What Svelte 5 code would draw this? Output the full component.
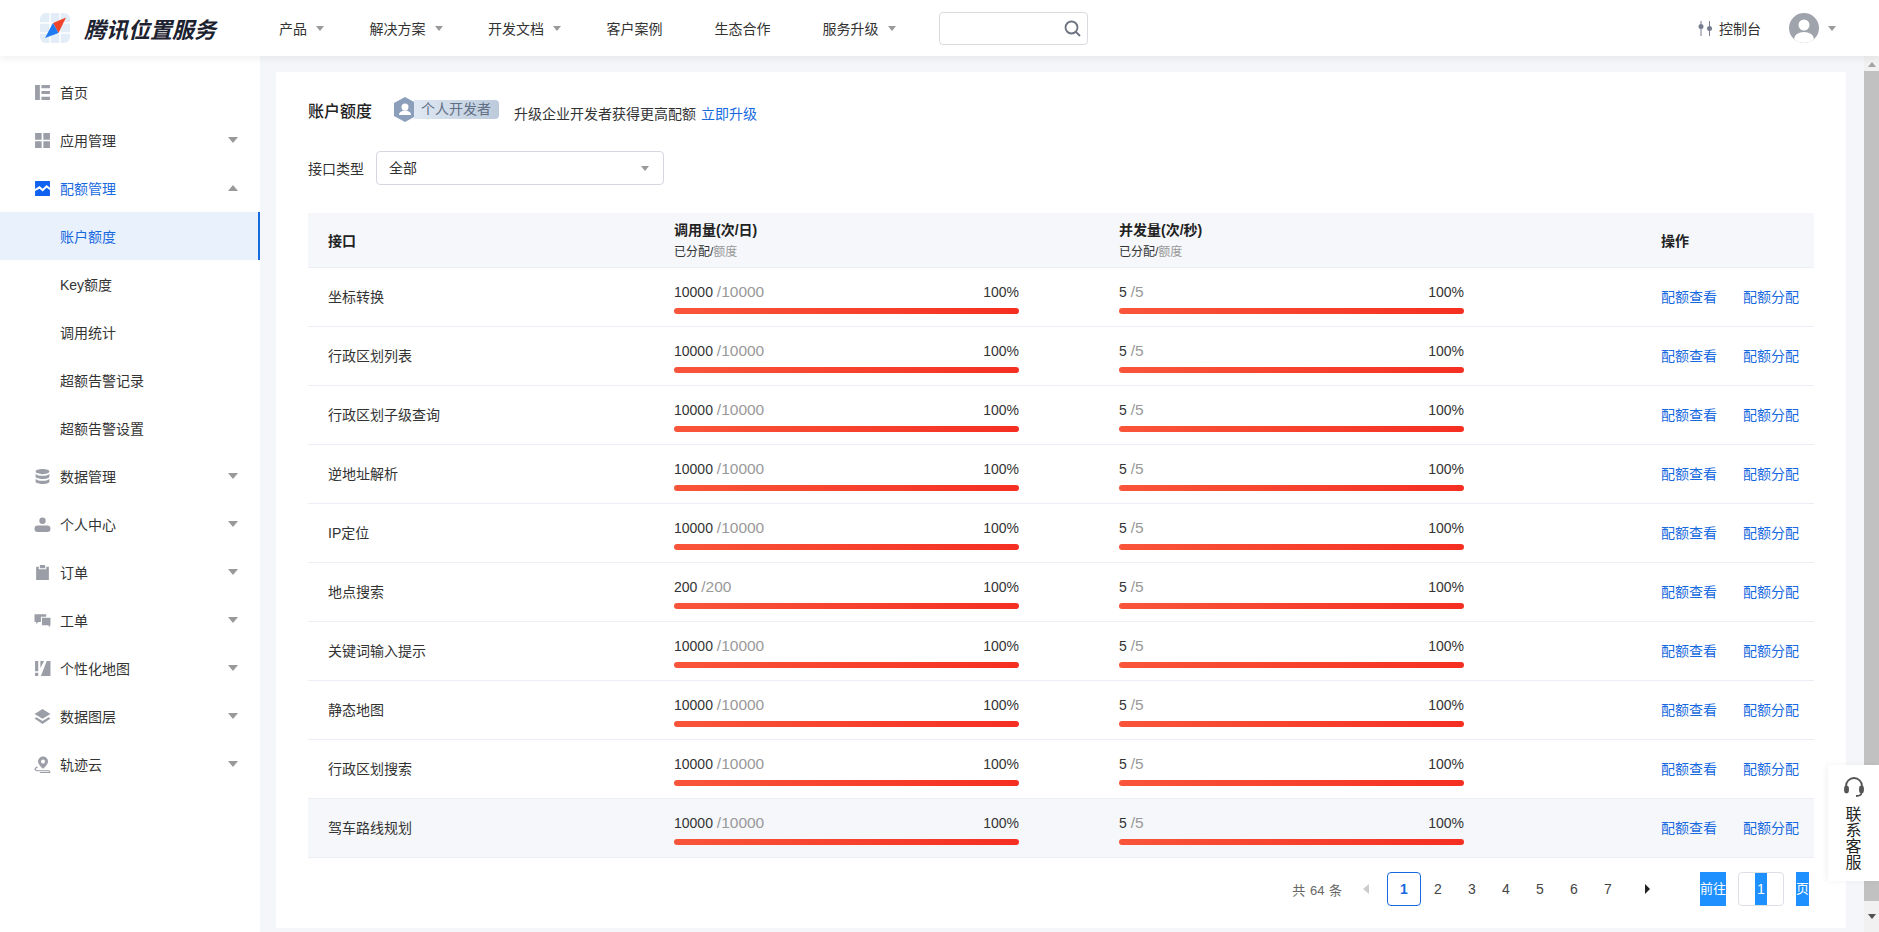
<script>
  const navItems = [
    { label: "产品", caret: true },
    { label: "解决方案", caret: true },
    { label: "开发文档", caret: true },
    { label: "客户案例" },
    { label: "生态合作" },
    { label: "服务升级", caret: true },
  ];

  const icons = {
    home: "M1 1h4.500v14H1zM7 1h8v3H7zM7 6.500h8v3H7zM7 12h8v3H7z",
    apps: "M1 1h6.200v6.200H1zM8.800 1H15v6.200H8.800zM1 8.800h6.200V15H1zM8.800 8.800H15V15H8.800z",
    quota: "M1 1h14v6.200l-3.200-2.400-3.600 3.400-3-2.600L1 8.400zM1 10.400l4.200-2.200 3 2.700 3.600-3.500L15 9.400V15H1z",
    data: "M8 1c3.600 0 6.500 1 6.500 2.400S11.600 5.800 8 5.800 1.500 4.800 1.500 3.400 4.400 1 8 1zM1.500 5.600C2.800 6.800 5.200 7.300 8 7.300s5.200-.5 6.500-1.700V8c0 1.400-2.900 2.400-6.500 2.400S1.500 9.400 1.500 8zM1.500 10.300c1.300 1.200 3.700 1.700 6.500 1.700s5.200-.5 6.500-1.700v2.300c0 1.400-2.900 2.400-6.500 2.400s-6.500-1-6.500-2.400z",
    user: "M8 1.500a3 3 0 1 1 0 6 3 3 0 0 1 0-6zM3.500 9h9a3 3 0 0 1 0 6h-9a3 3 0 0 1 0-6z",
    order: "M2 2.500h2.500V5h7V2.500H14V15H2zM5.500 1h5v3h-5z",
    ticket: "M0.500 2h11v2.500H6.500v5H4L2.200 11.500V9.500H.500zM7.500 5.500h8v7H15v1.500l-1.800-1.500H7.500z",
    map: "M1 1h3v9.500H1zM1 12h3v3H1zM6 1h3.500L6 7.500zM12 1h3.500v14H6.500z",
    layers: "M8 1l7.500 4.600L8 10.200.500 5.600zM2.300 8.700L8 12.200l5.700-3.500 1.800 1.100L8 15 .500 9.800z",
    track: "M8.500 .5a4.700 4.700 0 0 1 4.700 4.700c0 3-4.700 6.800-4.700 6.800S3.800 8.200 3.800 5.200A4.700 4.700 0 0 1 8.500 .5zm0 2.800a1.900 1.900 0 1 0 0 3.800 1.900 1.900 0 0 0 0-3.800zM2.800 9.800l1 1C2.600 11.200 1.800 11.800 1.800 12.400c0 .6.900 1 2.200 1h8.500c1.800 0 3 .6 3 1.600 0 .6-.5 1-1.200 1H5.500v-1h8.600c.2 0 .4-.1.400-.2 0-.2-.8-.4-2-.4H4c-2 0-3.500-.8-3.500-2 0-1 .9-2 2.300-2.600z",
  };

  const menu = [
    { label: "首页", icon: "home" },
    { label: "应用管理", icon: "apps", caret: "down" },
    { label: "配额管理", icon: "quota", caret: "up", open: true },
    { label: "账户额度", sub: true, active: true },
    { label: "Key额度", sub: true },
    { label: "调用统计", sub: true },
    { label: "超额告警记录", sub: true },
    { label: "超额告警设置", sub: true },
    { label: "数据管理", icon: "data", caret: "down" },
    { label: "个人中心", icon: "user", caret: "down" },
    { label: "订单", icon: "order", caret: "down" },
    { label: "工单", icon: "ticket", caret: "down" },
    { label: "个性化地图", icon: "map", caret: "down" },
    { label: "数据图层", icon: "layers", caret: "down" },
    { label: "轨迹云", icon: "track", caret: "down" },
  ];

  const rows = [
    { name: "坐标转换", calls: 10000 },
    { name: "行政区划列表", calls: 10000 },
    { name: "行政区划子级查询", calls: 10000 },
    { name: "逆地址解析", calls: 10000 },
    { name: "IP定位", calls: 10000 },
    { name: "地点搜索", calls: 200 },
    { name: "关键词输入提示", calls: 10000 },
    { name: "静态地图", calls: 10000 },
    { name: "行政区划搜索", calls: 10000 },
    { name: "驾车路线规划", calls: 10000, hover: true },
  ];

  const pages = [1, 2, 3, 4, 5, 6, 7];
</script>

<div class="app">
  <header class="topbar">
    <div class="logo">
      <svg width="30" height="30" viewBox="0 0 30 30">
        <rect width="30" height="30" rx="6" fill="#e3edf8" />
        <path d="M10 0v30M20 0v30M0 10h30M0 20h30" stroke="#fff" stroke-width="1.500" />
        <path d="M26 4.500L18.500 20 13 10z" fill="#f0452b" />
        <path d="M5 25L13 10l5.500 10z" fill="#1f7bf2" />
      </svg>
      <span class="brand">腾讯位置服务</span>
    </div>
    <nav class="nav">
      {#each navItems as item}
        <span class="nav-item" class:has-caret={item.caret}>
          {item.label}
          {#if item.caret}<i class="caret"></i>{/if}
        </span>
      {/each}
    </nav>
    <div class="search">
      <svg width="17" height="17" viewBox="0 0 17 17" fill="none" stroke="#6b7280" stroke-width="1.800">
        <circle cx="7.500" cy="7.500" r="6" />
        <path d="M12 12l4 4" />
      </svg>
    </div>
    <div class="top-right">
      <svg width="15" height="15" viewBox="0 0 15 15" fill="#767d8c">
        <path d="M2.500 0h1v3h-1zM2.500 8h1v7h-1zM11 0h1v5h-1zM11 10h1v5h-1z" />
        <circle cx="3" cy="5.500" r="2.500" />
        <circle cx="11.500" cy="7.500" r="2.500" />
      </svg>
      <span class="console">控制台</span>
      <svg class="avatar" width="30" height="30" viewBox="0 0 30 30">
        <defs>
          <clipPath id="avatar-clip"><circle cx="15" cy="15" r="15" /></clipPath>
        </defs>
        <circle cx="15" cy="15" r="15" fill="#9fa3ab" />
        <g clip-path="url(#avatar-clip)" fill="#fff">
          <circle cx="15" cy="12" r="5.500" />
          <ellipse cx="15" cy="26" rx="10" ry="7" />
        </g>
      </svg>
      <i class="caret"></i>
    </div>
  </header>

  <div class="body">
    <aside class="sidebar">
      {#each menu as item}
        <div class="menu-item" class:sub={item.sub} class:open={item.open} class:active={item.active}>
          {#if item.icon}
            <svg class="menu-icon" width="17" height="17" viewBox="0 0 16 16" fill="currentColor" fill-rule="evenodd">
              <path d={icons[item.icon]} />
            </svg>
          {/if}
          <span>{item.label}</span>
          {#if item.caret}
            <i class="menu-caret" class:up={item.caret === "up"}></i>
          {/if}
        </div>
      {/each}
    </aside>

    <main class="main">
      <section class="card">
        <div class="title-row">
          <h1>账户额度</h1>
          <div class="badge">
            <svg width="22" height="25" viewBox="0 0 22 25">
              <path d="M11 0l11 6v13l-11 6L0 19V6z" fill="#8c9fba" />
              <circle cx="11" cy="10" r="3.500" fill="#fff" />
              <path d="M5 18c0-3 3-4.500 6-4.500s6 1.500 6 4.500z" fill="#fff" />
            </svg>
            <span class="badge-label">个人开发者</span>
          </div>
          <p class="upgrade">升级企业开发者获得更高配额 <span class="link">立即升级</span></p>
        </div>

        <div class="filter">
          <span>接口类型</span>
          <div class="select"><span>全部</span><i class="caret"></i></div>
        </div>

        <div class="table">
          <div class="row head">
            <div class="name-cell"><strong>接口</strong></div>
            <div class="head-cell">
              <strong>调用量(次/日)</strong>
              <small>已分配/<em>额度</em></small>
            </div>
            <div class="head-cell">
              <strong>并发量(次/秒)</strong>
              <small>已分配/<em>额度</em></small>
            </div>
            <div class="action-cell"><strong>操作</strong></div>
          </div>
          {#each rows as row}
            <div class="row" class:hover={row.hover}>
              <div class="name-cell body-cell">{row.name}</div>
              <div class="usage">
                <div class="usage-text">
                  <span>{row.calls} <em>/{row.calls}</em></span>
                  <span>100%</span>
                </div>
                <div class="bar"></div>
              </div>
              <div class="usage">
                <div class="usage-text">
                  <span>5 <em>/5</em></span>
                  <span>100%</span>
                </div>
                <div class="bar"></div>
              </div>
              <div class="action-cell body-cell actions">
                <span class="link">配额查看</span>
                <span class="link">配额分配</span>
              </div>
            </div>
          {/each}
        </div>

        <div class="pager">
          <span class="total">共 64 条</span>
          <span class="page-arrow prev"></span>
          {#each pages as page}
            <span class="page" class:current={page === 1}>{page}</span>
          {/each}
          <span class="page-arrow next"></span>
          <span class="jump">前往</span>
          <span class="jump-input"><span>1</span></span>
          <span class="jump unit">页</span>
        </div>
      </section>
    </main>

    <div class="scrollbar">
      <i class="arrow-up"></i>
      <div class="thumb"></div>
      <i class="arrow-down"></i>
    </div>
  </div>

  <div class="contact">
    <svg width="22" height="21" viewBox="0 0 22 21" fill="none" stroke="#555" stroke-width="1.800">
      <path d="M3 11V9a8 8 0 0 1 16 0v2" />
      <rect x="2" y="9.500" width="3" height="6" rx="1.500" fill="#555" />
      <rect x="17" y="9.500" width="3" height="6" rx="1.500" fill="#555" />
      <path d="M18.500 15.500c0 2.500-2 3.500-5.500 3.500" />
    </svg>
    <span>联系客服</span>
  </div>
</div>

<style>
  :global(body) {
    margin: 0;
    font-family: "Liberation Sans", "Noto Sans CJK SC", sans-serif;
    font-size: 14px;
    color: #333;
    background: #f4f6f9;
  }

  .app {
    position: relative;
    display: flex;
    flex-direction: column;
    height: 932px;
    overflow: hidden;
  }

  .topbar {
    position: relative;
    z-index: 2;
    display: flex;
    align-items: center;
    flex: none;
    height: 56px;
    padding: 0 43px 0 40px;
    background: #fff;
    box-shadow: 0 2px 8px rgba(0, 0, 0, 0.07);
  }

  .logo {
    display: flex;
    align-items: center;
    gap: 14px;
  }

  .brand {
    font-size: 22px;
    font-weight: 700;
    font-style: italic;
    color: #1c2230;
    white-space: nowrap;
  }

  .nav {
    display: flex;
    gap: 52px;
    margin-left: 63px;
  }

  .nav-item {
    display: flex;
    align-items: center;
    gap: 9px;
    white-space: nowrap;
  }

  .nav-item.has-caret {
    margin-right: -6.500px;
  }

  .caret {
    display: block;
    width: 0;
    height: 0;
    border-style: solid;
    border-width: 5px 4px 0;
    border-color: #999 transparent transparent;
  }

  .search {
    display: flex;
    align-items: center;
    justify-content: flex-end;
    box-sizing: border-box;
    width: 149px;
    height: 33px;
    margin-left: 50px;
    padding-right: 6px;
    border: 1px solid #d8dbe0;
    border-radius: 4px;
  }

  .top-right {
    display: flex;
    align-items: center;
    margin-left: auto;
  }

  .console {
    margin: 0 28px 0 6px;
  }

  .avatar {
    margin-right: 9px;
  }

  .body {
    display: flex;
    flex: 1;
    min-height: 0;
  }

  .sidebar {
    flex: none;
    box-sizing: border-box;
    width: 260px;
    padding-top: 12px;
    background: #fff;
  }

  .menu-item {
    position: relative;
    display: flex;
    align-items: center;
    height: 48px;
    padding: 0 22px 0 34px;
    color: #333;
  }

  .menu-item.sub {
    padding-left: 60px;
  }

  .menu-item.open {
    color: #1769e0;
  }

  .menu-item.active {
    color: #1769e0;
    background: #e9f1fc;
    box-shadow: inset -2px 0 0 #1769e0;
  }

  .menu-icon {
    flex: none;
    margin-right: 9px;
    color: #9b9ea6;
  }

  .open .menu-icon {
    color: #0f62f0;
  }

  .menu-caret {
    width: 0;
    height: 0;
    margin-left: auto;
    border-style: solid;
    border-width: 6px 5px 0;
    border-color: #999 transparent transparent;
  }

  .menu-caret.up {
    border-width: 0 5px 6px;
    border-color: transparent transparent #999;
  }

  .main {
    flex: 1;
    min-width: 0;
    padding: 16px 18px 4px 16px;
  }

  .card {
    box-sizing: border-box;
    height: 856px;
    padding: 25px 32px 0;
    background: #fff;
  }

  .title-row {
    display: flex;
    align-items: center;
    height: 25px;
  }

  h1 {
    margin: 0 22px 0 0;
    font-size: 16px;
    font-weight: 500;
    color: #222;
  }

  .badge {
    display: flex;
    align-items: center;
  }

  .badge-label {
    margin-left: -2px;
    padding: 0 8px 0 7px;
    height: 19px;
    line-height: 19px;
    font-size: 14px;
    color: #5f6f85;
    border-radius: 0 4px 4px 0;
    background: linear-gradient(90deg, #dfe8f3, #bccadb);
  }

  .upgrade {
    margin: 6px 0 0 15px;
    white-space: nowrap;
  }

  .upgrade .link {
    margin-left: 1px;
  }

  .link {
    color: #1769e0;
  }

  .filter {
    display: flex;
    align-items: center;
    gap: 12px;
    margin-top: 29px;
  }

  .select {
    display: flex;
    align-items: center;
    justify-content: space-between;
    box-sizing: border-box;
    width: 288px;
    height: 34px;
    padding: 0 14px 0 12px;
    border: 1px solid #d5d8de;
    border-radius: 4px;
  }

  .select span {
    padding-bottom: 2px;
  }

  .table {
    margin-top: 28px;
  }

  .row {
    display: grid;
    grid-template-columns: 366px 445px 542px 1fr;
    box-sizing: border-box;
    height: 59px;
    border-bottom: 1px solid #ebeef5;
  }

  .row.head {
    height: 55px;
    background: #f5f7fa;
  }

  .row.hover {
    background: #f5f7fa;
  }

  .name-cell {
    display: flex;
    align-items: center;
    padding-left: 20px;
  }

  .body-cell {
    padding-bottom: 2px;
  }

  .head-cell {
    display: flex;
    flex-direction: column;
    gap: 3px;
    padding-top: 6px;
  }

  strong {
    font-weight: 700;
    color: #222;
  }

  small {
    font-size: 12px;
  }

  em {
    font-style: normal;
    color: #999;
  }

  .usage-text em {
    font-size: 15.500px;
  }

  .action-cell {
    display: flex;
    align-items: center;
  }

  .actions {
    gap: 26px;
  }

  .usage {
    width: 345px;
    padding-top: 14px;
  }

  .usage-text {
    display: flex;
    justify-content: space-between;
    height: 20px;
    line-height: 20px;
  }

  .bar {
    height: 6px;
    margin-top: 6px;
    border-radius: 3px;
    background: linear-gradient(90deg, #f9553a, #f52f22);
  }

  .pager {
    display: flex;
    align-items: center;
    justify-content: flex-end;
    height: 34px;
    margin-top: 14px;
    padding-right: 5px;
  }

  .total {
    margin-right: 11px;
    font-size: 13px;
    color: #666;
    word-spacing: 1px;
  }

  .page-arrow {
    display: flex;
    align-items: center;
    justify-content: center;
    width: 34px;
    height: 34px;
  }

  .page-arrow::before {
    content: "";
    border-style: solid;
  }

  .prev::before {
    margin-right: 9px;
    border-width: 5px 6px 5px 0;
    border-color: transparent #ccc transparent transparent;
  }

  .next {
    margin: 0 36px 0 5px;
  }

  .next::before {
    border-width: 5px 0 5px 5px;
    border-color: transparent transparent transparent #222;
  }

  .page {
    box-sizing: border-box;
    width: 34px;
    height: 34px;
    line-height: 34px;
    text-align: center;
    color: #444;
  }

  .page.current {
    line-height: 32px;
    font-weight: 700;
    color: #1769e0;
    border: 1px solid #1769e0;
    border-radius: 4px;
  }

  .jump {
    width: 26px;
    height: 34px;
    line-height: 34px;
    font-size: 13px;
    white-space: nowrap;
    color: #fff;
    background: #1e90ff;
  }

  .jump.unit {
    width: 13px;
  }

  .jump-input {
    display: flex;
    justify-content: center;
    box-sizing: border-box;
    width: 46px;
    height: 34px;
    margin: 0 12px;
    border: 1px solid #dcdfe6;
    border-radius: 4px;
  }

  .jump-input span {
    width: 12px;
    line-height: 32px;
    text-align: center;
    color: #fff;
    background: #1e90ff;
  }

  .scrollbar {
    display: flex;
    flex-direction: column;
    align-items: center;
    flex: none;
    width: 15px;
    background: #f1f1f1;
  }

  .thumb {
    width: 100%;
    height: 830px;
    margin-top: 4px;
    background: #c1c1c1;
  }

  .arrow-up,
  .arrow-down {
    width: 0;
    height: 0;
    border-style: solid;
  }

  .arrow-up {
    margin-top: 6px;
    border-width: 0 4px 5px;
    border-color: transparent transparent #a3a3a3;
  }

  .arrow-down {
    margin-top: 13px;
    border-width: 5px 4px 0;
    border-color: #505050 transparent transparent;
  }

  /* floating help widget over the scrollbar */
  .contact {
    position: absolute;
    top: 765px;
    right: 0;
    display: flex;
    flex-direction: column;
    align-items: center;
    gap: 9px;
    box-sizing: border-box;
    width: 51px;
    height: 116px;
    padding-top: 12px;
    background: #fff;
    box-shadow: -2px 0 6px rgba(0, 0, 0, 0.05);
  }

  .contact span {
    width: 16px;
    font-size: 16px;
    line-height: 16px;
    color: #222;
  }
</style>
